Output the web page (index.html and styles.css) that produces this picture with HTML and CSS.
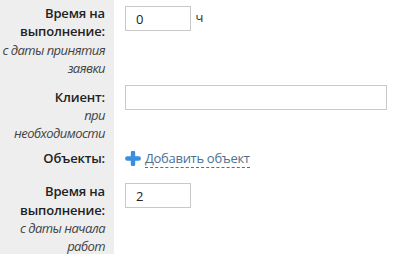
FILE: index.html
```html
<!DOCTYPE html>
<html lang="ru">

<head>
    <meta charset="UTF-8">
    <title>Заявка</title>
    <link rel="stylesheet" href="styles.css">
</head>

<body>
    <div class="form">
        <div class="row row-first">
            <div class="label">
                <b>Время на выполнение:</b>
                <i>с даты принятия заявки</i>
            </div>
            <div class="field">
                <input type="text" class="input input-short" value="0"> ч
            </div>
        </div>

        <div class="row row-client">
            <div class="label">
                <b>Клиент:</b>
                <i>при необходимости</i>
            </div>
            <div class="field">
                <input type="text" class="input input-long" value="">
            </div>
        </div>

        <div class="row row-objects">
            <div class="label">
                <b>Объекты:</b>
            </div>
            <div class="field">
                <a class="add-link" href="#">
                    <svg class="plus" width="16" height="15" viewBox="0 0 16 15">
                        <path d="M8 1.8v11.4M2.3 7.5h11.4" stroke="#3a8ee0" stroke-width="4.4" stroke-linecap="round" />
                    </svg>
                    <span>Добавить объект</span>
                </a>
            </div>
        </div>

        <div class="row row-last">
            <div class="label">
                <b>Время на выполнение:</b>
                <i>с даты начала работ</i>
            </div>
            <div class="field">
                <input type="text" class="input input-short" value="2">
            </div>
        </div>
    </div>
</body>

</html>
```

FILE: styles.css
```css
* {
    margin: 0;
    padding: 0;
    box-sizing: border-box;
}

body {
    font-family: 'Open Sans', 'Noto Sans', sans-serif;
    font-size: 13px;
    line-height: 18.4px;
    color: #222;
    background: white;
    overflow: hidden;
}

.form {
    display: flex;
    flex-direction: column;
}

.row {
    display: flex;
}

.label {
    width: 114px;
    flex-shrink: 0;
    background: #eeeeee;
    padding: 4px 9px 5px 0;
    text-align: right;
}

.label b {
    display: block;
    font-weight: 600;
    color: #222;
    letter-spacing: -0.15px;
}

.label i {
    display: block;
    color: #444;
    letter-spacing: -0.55px;
    margin-left: -4px;
}

.field {
    padding-left: 11px;
    color: #333;
}

.input {
    height: 25px;
    border: 1px solid #c9c9c9;
    padding: 0 10px;
    font-family: inherit;
    font-size: 13px;
    color: #222;
    background: white;
    vertical-align: middle;
}

.input-short {
    width: 66px;
}

.input-long {
    width: 262px;
}

.row-first .label {
    padding-top: 4px;
}

.row-first .field {
    padding-top: 6px;
}

.row-first .field .input {
    margin-right: 1px;
}

.row-client .label {
    padding-top: 5px;
    padding-bottom: 4px;
}

.row-client .field {
    padding-top: 2px;
}

.row-objects .label {
    padding-top: 2px;
    padding-bottom: 10px;
}

.row-objects .field {
    padding-top: 3px;
}

.add-link {
    display: inline-flex;
    align-items: center;
    gap: 4px;
    text-decoration: none;
    color: #4d6f92;
}

.add-link span {
    border-bottom: 1px dashed #4d6f92;
    line-height: 17px;
    letter-spacing: -0.3px;
}

.plus {
    display: block;
}

.row-last .label {
    padding-top: 5px;
}

.row-last .field {
    padding-top: 6px;
}
```
